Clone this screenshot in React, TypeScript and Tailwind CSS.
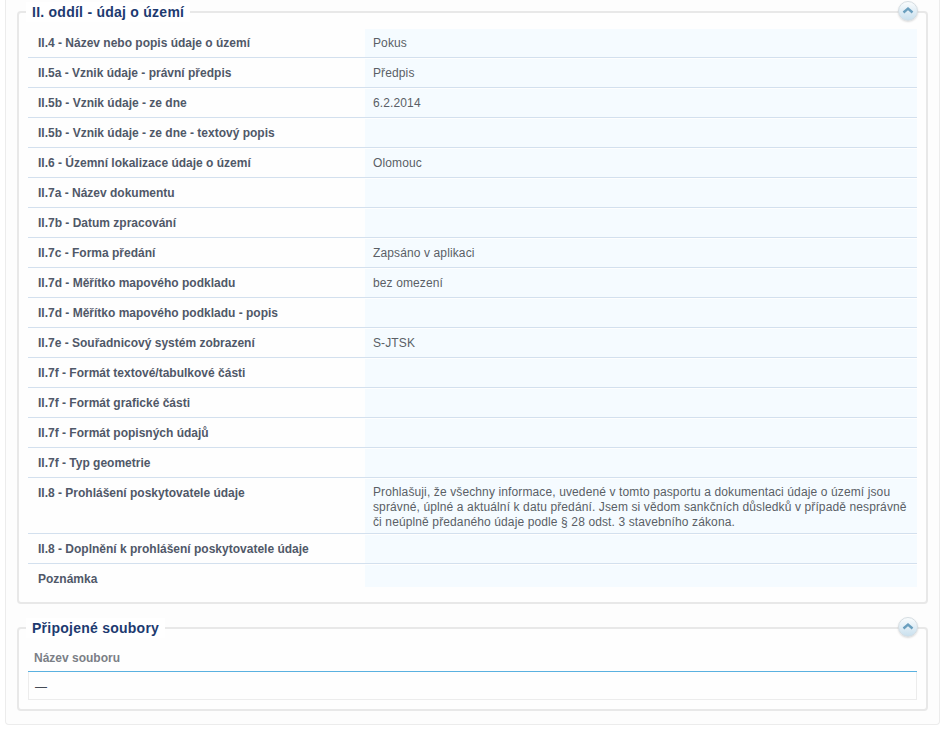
const rows = [
  { label: "II.4 - Název nebo popis údaje o území", value: "Pokus" },
  { label: "II.5a - Vznik údaje - právní předpis", value: "Předpis" },
  { label: "II.5b - Vznik údaje - ze dne", value: "6.2.2014" },
  { label: "II.5b - Vznik údaje - ze dne - textový popis", value: "" },
  { label: "II.6 - Územní lokalizace údaje o území", value: "Olomouc" },
  { label: "II.7a - Název dokumentu", value: "" },
  { label: "II.7b - Datum zpracování", value: "" },
  { label: "II.7c - Forma předání", value: "Zapsáno v aplikaci" },
  { label: "II.7d - Měřítko mapového podkladu", value: "bez omezení" },
  { label: "II.7d - Měřítko mapového podkladu - popis", value: "" },
  { label: "II.7e - Souřadnicový systém zobrazení", value: "S-JTSK" },
  { label: "II.7f - Formát textové/tabulkové části", value: "" },
  { label: "II.7f - Formát grafické části", value: "" },
  { label: "II.7f - Formát popisných údajů", value: "" },
  { label: "II.7f - Typ geometrie", value: "" },
  {
    label: "II.8 - Prohlášení poskytovatele údaje",
    value:
      "Prohlašuji, že všechny informace, uvedené v tomto pasportu a dokumentaci údaje o území jsou správné, úplné a aktuální k datu předání. Jsem si vědom sankčních důsledků v případě nesprávně či neúplně předaného údaje podle § 28 odst. 3 stavebního zákona.",
  },
  { label: "II.8 - Doplnění k prohlášení poskytovatele údaje", value: "" },
];

function CollapseButton() {
  return (
    <button className="absolute right-[8px] top-[-21px] flex h-[20px] w-[20px] items-center justify-center rounded-full border border-[#d5dde2] bg-gradient-to-b from-[#fafcfd] to-[#c9e0ee] shadow-[0_1px_2px_rgba(0,0,0,0.15)]">
      <svg width="12" height="8" viewBox="0 0 12 8" className="mb-[2px]">
        <path d="M1.5 6.5 L6 2.5 L10.5 6.5" fill="none" stroke="#6a9fbe" strokeWidth="2.4" />
      </svg>
    </button>
  );
}

function Row({ label, value, last }: { label: string; value: string; last?: boolean }) {
  const long = value.length > 100;
  return (
    <div className={last ? "flex min-h-[23px]" : "flex min-h-[30px] border-b border-[#d3e0ee]"}>
      <div className="w-[337px] shrink-0 pl-[10px] pt-[8px] font-bold leading-[14px] text-[#505868]">
        {label}
      </div>
      <div
        className={
          long
            ? "mt-px flex-1 bg-[#f5fbff] pb-[3px] pl-[8px] pr-[6px] pt-[6px] leading-[15px] tracking-[0.12px] text-[#5a5f66]"
            : "mt-px flex-1 bg-[#f5fbff] pb-[3px] pl-[8px] pr-[6px] pt-[7px] leading-[15px] tracking-[0.12px] text-[#5a5f66]"
        }
      >
        {value}
      </div>
    </div>
  );
}

export default function App() {
  return (
    <div className="h-[730px] overflow-hidden bg-white font-['Liberation_Sans',Arial,sans-serif] text-[12px]">
      <div className="mx-[5px] h-[725px] rounded-b-[4px] border-x border-b border-[#ececec] bg-[#fdfdfd] px-[11px] pt-[1px]">
        <fieldset className="relative mt-[1px] h-[602px] rounded-[4px] border-2 border-[#e8e8e8] bg-[#fefefe] px-[9px] pb-0">
          <legend className="-ml-[2px] bg-white px-[6px] text-[14px] font-bold leading-[20px] tracking-[0.25px] text-[#1d3a70]">
            II. oddíl - údaj o území
          </legend>
          <CollapseButton />
          <div className="mt-[6px]">
            {rows.map((r) => (
              <Row key={r.label} label={r.label} value={r.value} />
            ))}
            <Row label="Poznámka" value="" last />
          </div>
        </fieldset>

        <fieldset className="relative mt-[14px] h-[93px] rounded-[4px] border-2 border-[#e8e8e8] bg-[#fefefe] px-[9px]">
          <legend className="-ml-[2px] bg-white px-[6px] text-[14px] font-bold leading-[20px] tracking-[0.25px] text-[#1d3a70]">
            Připojené soubory
          </legend>
          <CollapseButton />
          <div className="mt-[5px] h-[29px] border-b border-[#5ab1e0] pl-[6px] pt-[8px] font-bold leading-[14px] text-[#7b7f86]">
            Název souboru
          </div>
          <div className="h-[28px] border-x border-b border-[#ececec] pl-[6px] pt-[8px] leading-[14px] text-[#444b55]">
            —
          </div>
        </fieldset>
      </div>
    </div>
  );
}
